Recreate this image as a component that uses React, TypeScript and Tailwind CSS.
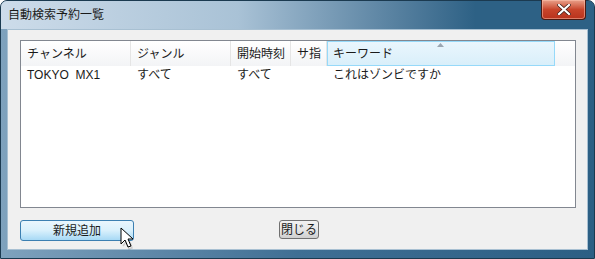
import React from 'react';

const FONT = '"Liberation Sans", "Noto Sans CJK JP", sans-serif';

const COLUMNS = [
  { label: 'チャンネル', width: 110 },
  { label: 'ジャンル', width: 100 },
  { label: '開始時刻', width: 60 },
  { label: 'サ指', width: 36 },
];

const ROWS = [
  { channel: 'TOKYO\u00a0\u00a0MX1', genre: 'すべて', start: 'すべて', sub: '', keyword: 'これはゾンビですか' },
];

function CloseButton() {
  return (
    <div className="absolute right-[9px] top-0 flex h-[20px] w-[45px] items-center justify-center rounded-b-[4px] border border-t-0 border-[#4a1a12] bg-gradient-to-b from-[#e8a08a] via-[#c8452b] to-[#b8321c] shadow-[inset_0_0_0_1px_rgba(255,200,180,0.5)]">
      <svg width="14" height="11" viewBox="0 0 14 11">
        <path d="M2 1 L12 10 M12 1 L2 10" stroke="#3a1a14" strokeWidth="3.6" strokeLinecap="square" />
        <path d="M2 1 L12 10 M12 1 L2 10" stroke="#ffffff" strokeWidth="2.2" strokeLinecap="square" />
      </svg>
    </div>
  );
}

function Cursor() {
  return (
    <svg className="absolute left-[120px] top-[227px]" width="16" height="23" viewBox="0 0 16 23">
      <path d="M1 1 L1 17 L5 13 L8 20 L11 19 L8 12 L13 12 Z" fill="#ffffff" stroke="#000000" strokeWidth="1" strokeLinejoin="round" />
      <path d="M3 19 L6 15 L9 22 L12 21 L10 15" fill="none" stroke="rgba(0,0,0,0.15)" strokeWidth="1.5" />
    </svg>
  );
}

export default function App() {
  return (
    <div className="relative h-[259px] w-[595px] overflow-hidden" style={{ fontFamily: FONT }}>
      <div className="flex h-full w-full flex-col overflow-hidden rounded-t-[7px] border border-[#1b3a50] bg-gradient-to-r from-[#7fa2bd] via-[#3f6f94] to-[#2c5f84] pb-[8px]">
        {/* Title bar */}
        <div className="flex h-[28px] shrink-0 items-center bg-gradient-to-r from-[#cddcea] via-[#a9c2d6] via-40% to-[#2d6185] to-80% pl-[7px] text-[12px] text-[#1a1a1a]">
          自動検索予約一覧
        </div>

        {/* Client area */}
        <div className="relative mx-[6px] flex flex-1 flex-col border border-[#a8c0d2] bg-[#f0f0f0] px-[12px] pt-[10px]">
          {/* List view */}
          <div className="h-[168px] w-[556px] border border-[#828790] bg-white">
            <div className="flex h-[25px] text-[12px] text-[#1a1a1a]">
              {COLUMNS.map((c) => (
                <div
                  key={c.label}
                  className="flex h-full items-center border-r border-[#e5e5e5] bg-gradient-to-b from-white to-[#f3f4f6] pl-[6px]"
                  style={{ width: c.width }}
                >
                  {c.label}
                </div>
              ))}
              <div className="relative flex h-full w-[228px] items-center border border-[#96d9f9] bg-gradient-to-b from-[#eaf6fd] to-[#d9effa] pl-[5px]">
                <span className="absolute left-[109px] top-[1px] leading-none">
                  <svg width="7" height="4" viewBox="0 0 7 4">
                    <path d="M0 4 L3.5 0 L7 4 Z" fill="#9aa6b2" />
                  </svg>
                </span>
                キーワード
              </div>
              <div className="h-full flex-1 bg-gradient-to-b from-white to-[#f3f4f6]" />
            </div>
            {ROWS.map((r, i) => (
              <div key={i} className="flex h-[17px] items-center text-[12px] text-[#1a1a1a]">
                <div className="w-[110px] pl-[6px]">{r.channel}</div>
                <div className="w-[100px] pl-[6px]">{r.genre}</div>
                <div className="w-[60px] pl-[6px]">{r.start}</div>
                <div className="w-[36px] pl-[6px]">{r.sub}</div>
                <div className="pl-[6px]">{r.keyword}</div>
              </div>
            ))}
          </div>

          {/* Buttons */}
          <div className="mt-[12px] flex items-start">
            <button className="flex h-[21px] w-[114px] items-center justify-center rounded-[3px] border border-[#3c7fb1] bg-gradient-to-b from-[#eaf6fd] via-[#d9f0fc] to-[#a7d9f5] text-[12px] text-[#1a1a1a]">
              新規追加
            </button>
            <button className="ml-[145px] flex h-[19px] w-[40px] items-center justify-center rounded-[3px] border border-[#707070] bg-gradient-to-b from-[#f2f2f2] via-[#e6e6e6] to-[#cfcfcf] text-[12px] text-[#1a1a1a]">
              閉じる
            </button>
          </div>
        </div>
      </div>
      <CloseButton />
      <Cursor />
    </div>
  );
}
